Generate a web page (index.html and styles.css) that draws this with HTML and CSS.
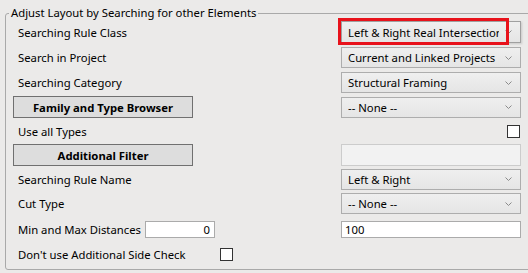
FILE: index.html
```html
<!DOCTYPE html>
<html lang="en">
<head>
    <meta charset="UTF-8">
    <title>Adjust Layout</title>
    <link rel="stylesheet" href="styles.css">
</head>
<body>
    <fieldset class="group">
        <legend>Adjust Layout by Searching for other Elements</legend>
        <div class="grid">
            <div class="lbl">Searching Rule Class</div>
            <div class="cell">
                <div class="combo focused">
                    <span class="combo-text">Left &amp; Right Real Intersection</span>
                    <svg class="arrow" width="7" height="4" viewBox="0 0 7 4"><polyline points="0.5,0.5 3.5,3.5 6.5,0.5" fill="none" stroke="#8a8a8a" stroke-width="1"/></svg>
                </div>
                <div class="highlight"></div>
            </div>

            <div class="lbl">Search in Project</div>
            <div class="combo">
                <span class="combo-text">Current and Linked Projects</span>
                <svg class="arrow" width="7" height="4" viewBox="0 0 7 4"><polyline points="0.5,0.5 3.5,3.5 6.5,0.5" fill="none" stroke="#8a8a8a" stroke-width="1"/></svg>
            </div>

            <div class="lbl">Searching Category</div>
            <div class="combo">
                <span class="combo-text">Structural Framing</span>
                <svg class="arrow" width="7" height="4" viewBox="0 0 7 4"><polyline points="0.5,0.5 3.5,3.5 6.5,0.5" fill="none" stroke="#8a8a8a" stroke-width="1"/></svg>
            </div>

            <div><button class="btn">Family and Type Browser</button></div>
            <div class="combo">
                <span class="combo-text">-- None --</span>
                <svg class="arrow" width="7" height="4" viewBox="0 0 7 4"><polyline points="0.5,0.5 3.5,3.5 6.5,0.5" fill="none" stroke="#8a8a8a" stroke-width="1"/></svg>
            </div>

            <div class="lbl">Use all Types</div>
            <div class="check-right"><span class="check"></span></div>

            <div><button class="btn">Additional Filter</button></div>
            <div class="field disabled"></div>

            <div class="lbl">Searching Rule Name</div>
            <div class="combo">
                <span class="combo-text">Left &amp; Right</span>
                <svg class="arrow" width="7" height="4" viewBox="0 0 7 4"><polyline points="0.5,0.5 3.5,3.5 6.5,0.5" fill="none" stroke="#8a8a8a" stroke-width="1"/></svg>
            </div>

            <div class="lbl">Cut Type</div>
            <div class="combo">
                <span class="combo-text">-- None --</span>
                <svg class="arrow" width="7" height="4" viewBox="0 0 7 4"><polyline points="0.5,0.5 3.5,3.5 6.5,0.5" fill="none" stroke="#8a8a8a" stroke-width="1"/></svg>
            </div>

            <div class="inline">
                <span class="lbl lbl-min">Min and Max Distances</span>
                <span class="field small num">0</span>
            </div>
            <div class="field">100</div>

            <div class="inline">
                <span class="lbl lbl-side">Don't use Additional Side Check</span>
                <span class="check"></span>
            </div>
            <div></div>
        </div>
    </fieldset>
</body>
</html>
```

FILE: styles.css
```css
/* Windows style form panel */
body {
    margin: 0;
    background-color: #ebeae9;
    font-family: 'Noto Sans', 'Open Sans', sans-serif;
    font-size: 11.3px;
    color: #000;
    overflow: hidden;
}

.group {
    margin: 7px 0 0 5px;
    padding: 0 0 2px 7px;
    width: 560px;
    min-width: 0;
    border: 1px solid #a9a9a9;
    border-radius: 3px;
}

.group legend {
    margin-left: -4px;
    padding: 0 2px;
    line-height: 12px;
}

.grid {
    display: grid;
    grid-template-columns: 328px 180px;
    grid-template-rows: 26px 25px 25px 24px 24px 24px 24px 25px 26px 25px;
    align-items: center;
}

.lbl {
    padding-left: 5px;
    white-space: nowrap;
}

.cell {
    position: relative;
}

.combo {
    display: flex;
    align-items: center;
    height: 21px;
    box-sizing: border-box;
    padding: 0 8px 0 6px;
    border: 1px solid #adadad;
    background: linear-gradient(#efefef, #e5e5e5);
}

.combo.focused {
    height: 22px;
    border-color: #a0a0a0;
    box-shadow: 1px 1px 2px rgba(0, 0, 0, 0.15);
}

.combo-text {
    flex: 1;
    overflow: hidden;
    white-space: nowrap;
}

.arrow {
    margin-left: 6px;
    flex-shrink: 0;
}

/* red annotation frame */
.highlight {
    position: absolute;
    left: -3px;
    top: -3px;
    width: 171px;
    height: 27px;
    box-sizing: border-box;
    border: 3px solid #e8121b;
    pointer-events: none;
}

.btn {
    display: block;
    width: 180px;
    height: 22px;
    padding: 0;
    border: 1px solid #707070;
    background-color: #dddddd;
    font-family: inherit;
    font-size: 11.3px;
    font-weight: bold;
    color: #000;
}

.check-right {
    display: flex;
    justify-content: flex-end;
    padding-right: 1px;
}

.check {
    display: inline-block;
    width: 13px;
    height: 13px;
    box-sizing: border-box;
    border: 1px solid #333;
    background-color: #fff;
}

.field {
    height: 17px;
    box-sizing: border-box;
    padding: 0 3px;
    border: 1px solid #ababab;
    background-color: #fff;
    line-height: 15px;
}

.field.disabled {
    height: 22px;
    border-color: #cccccc;
    background-color: #f2f2f2;
}

.inline {
    display: flex;
    align-items: center;
}

.lbl-min {
    width: 132px;
    box-sizing: border-box;
}

.lbl-side {
    width: 207px;
    box-sizing: border-box;
}

.field.small {
    width: 70px;
}

.num {
    text-align: right;
    padding-right: 4px;
}
```
